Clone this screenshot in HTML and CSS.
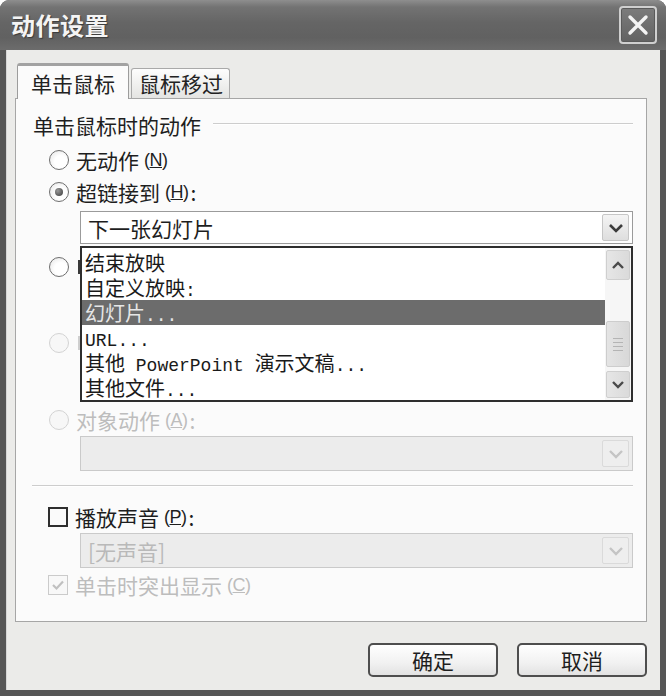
FILE: index.html
```html
<!DOCTYPE html>
<html lang="zh-CN">
<head>
<meta charset="utf-8">
<title>动作设置</title>
<link rel="stylesheet" href="styles.css">
</head>
<body>
<div class="window">
  <div class="titlebar">
    <span class="title">动作设置</span>
    <span class="close">
      <svg width="24" height="24" viewBox="0 0 24 24"><path d="M4 4 L20 20 M20 4 L4 20" stroke="#f4f4f4" stroke-width="3.4" stroke-linecap="round" fill="none"/></svg>
    </span>
  </div>
  <div class="client">
    <div class="tabs">
      <div class="tab active">单击鼠标</div>
      <div class="tab">鼠标移过</div>
    </div>
    <div class="panel">
      <div class="group-head"><span>单击鼠标时的动作</span><i class="rule"></i></div>

      <label class="opt gap-a"><span class="radio"></span>无动作<span class="acc">(<u>N</u>)</span></label>
      <label class="opt gap-b"><span class="radio on"></span>超链接到<span class="acc">(<u>H</u>)</span>:</label>

      <div class="combo-wrap gap-c">
        <div class="combo">
          <span class="combo-text">下一张幻灯片</span>
          <span class="drop">
            <svg width="16" height="10" viewBox="0 0 16 10"><path d="M2 2 L8 8 L14 2" stroke="#3c3c3c" stroke-width="2.6" fill="none"/></svg>
          </span>
        </div>
        <div class="list">
          <ul class="items">
            <li>结束放映</li>
            <li>自定义放映<span class="m">:</span></li>
            <li class="sel">幻灯片<span class="m">...</span></li>
            <li><span class="m">URL...</span></li>
            <li>其他<span class="m"> PowerPoint </span>演示文稿<span class="m">...</span></li>
            <li>其他文件<span class="m">...</span></li>
          </ul>
          <div class="vscroll">
            <span class="sbtn">
              <svg width="14" height="9" viewBox="0 0 14 9"><path d="M2 7 L7 2 L12 7" stroke="#4a4a4a" stroke-width="2.4" fill="none"/></svg>
            </span>
            <span class="track"></span>
            <span class="thumb"><i></i><i></i><i></i><i></i></span>
            <span class="sbtn down">
              <svg width="14" height="9" viewBox="0 0 14 9"><path d="M2 2 L7 7 L12 2" stroke="#4a4a4a" stroke-width="2.4" fill="none"/></svg>
            </span>
          </div>
        </div>
      </div>

      <label class="opt gap-a2" aria-label="运行程序(R):"><span class="radio"></span><span class="peek"></span></label>
      <div class="field gap-a2"></div>
      <label class="opt disabled gap-a2" aria-label="运行宏(M):"><span class="radio"></span><span class="peek"></span></label>
      <div class="combo disabled gap-c"></div>

      <label class="opt disabled gap-d"><span class="radio"></span>对象动作<span class="acc">(<u>A</u>)</span>:</label>
      <div class="combo disabled tall gap-e">
        <span class="combo-text"></span>
        <span class="drop">
          <svg width="16" height="10" viewBox="0 0 16 10"><path d="M2 2 L8 8 L14 2" stroke="#c4c4c4" stroke-width="2.4" fill="none"/></svg>
        </span>
      </div>

      <i class="separator"></i>

      <label class="opt check-row"><span class="check"></span>播放声音<span class="acc">(<u>P</u>)</span>:</label>
      <div class="combo disabled tall gap-e">
        <span class="combo-text">[无声音]</span>
        <span class="drop">
          <svg width="16" height="10" viewBox="0 0 16 10"><path d="M2 2 L8 8 L14 2" stroke="#c4c4c4" stroke-width="2.4" fill="none"/></svg>
        </span>
      </div>
      <label class="opt disabled check-row2"><span class="check off">
        <svg width="14" height="12" viewBox="0 0 14 12"><path d="M2 6 L5.5 9.5 L12 2.5" stroke="#c0c0c0" stroke-width="2.2" fill="none"/></svg>
      </span>单击时突出显示<span class="acc">(<u>C</u>)</span></label>
    </div>
    <div class="buttons">
      <button class="btn">确定</button>
      <button class="btn">取消</button>
    </div>
  </div>
</div>
</body>
</html>
```
FILE: styles.css
```css
* { box-sizing: border-box; margin: 0; padding: 0; }
html, body { width: 666px; height: 696px; overflow: hidden; background: #ffffff; }
body { font-family: "Noto Sans CJK SC", "Noto Sans", sans-serif; color: #1e1e1e; }

.window {
  width: 666px; height: 696px;
  background: #565656;
  border-radius: 9px 9px 0 0;
  display: flex; flex-direction: column;
  overflow: hidden;
}

.titlebar {
  height: 50px; flex: none;
  display: flex; align-items: center; justify-content: space-between;
  padding: 0 9px 0 11px;
  background: linear-gradient(#8e8e8e 0, #737373 14%, #656565 45%, #616161 75%, #6c6c6c 100%);
}
.title {
  font-size: 24px; line-height: 30px; font-weight: bold;
  color: #f4f4f4; letter-spacing: 0.5px;
  text-shadow: 1px 1px 1px #3a3a3a;
}
.close {
  width: 38px; height: 38px;
  border: 2px solid #cfcfcf; border-radius: 4px;
  background: linear-gradient(#7c7c7c, #626262);
  display: flex; align-items: center; justify-content: center;
  box-shadow: inset 0 0 0 1px #5a5a5a;
}

.client {
  flex: 1;
  margin: 0 6px 6px 6px;
  background: #ebebe9;
  border-left: 1px solid #d6d6d6;
  display: flex; flex-direction: column;
  padding: 13px 13px 0 8px;
}

.tabs { display: flex; align-items: flex-end; height: 35px; padding-left: 2px; position: relative; z-index: 2; }
.tab {
  font-size: 21px; line-height: 28px; color: #222;
  height: 30px; padding: 0 6px 0 7px;
  border: 1px solid #a9a9a9; border-bottom: none;
  border-radius: 3px 3px 0 0;
  background: linear-gradient(#fdfdfd, #e4e4e2);
  margin-left: 2px;
}
.tab.active {
  height: 36px; margin-bottom: -1px; margin-left: 0;
  padding: 3px 13px 0 13px;
  background: #fbfbfb;
  border-color: #9c9c9c;
  border-top: 3px solid #a2a2a2;
}

.panel {
  height: 524px; flex: none;
  background: #fbfbfb;
  border: 1px solid #a6a6a6;
  padding: 14px 13px 0 17px;
  display: flex; flex-direction: column;
  position: relative; z-index: 1;
}

.group-head { display: flex; align-items: center; height: 24px; font-size: 21px; line-height: 24px; }
.group-head .rule { flex: 1; height: 2px; background: #cdcdcd; border-bottom: 1px solid #fff; margin: -3px 0 0 12px; }

.opt {
  display: flex; align-items: center;
  height: 24px; font-size: 21px; line-height: 24px;
  padding-left: 16px;
  white-space: nowrap;
}
.opt.disabled { color: #bdbdbd; }
.acc { font-family: "Liberation Sans", sans-serif; font-size: 18px; margin: 0 2px 0 5px; letter-spacing: -0.5px; }
.peek { display: block; width: 4px; height: 14px; border-left: 2px solid #3a3a3a; margin-left: 2px; }
.disabled .peek { border-left-color: #cfcfcf; }

.radio {
  width: 20px; height: 20px; flex: none;
  border-radius: 50%;
  border: 1.6px solid #6e6e6e;
  background: radial-gradient(circle at 60% 60%, #ffffff 40%, #e2e2e2 100%);
  margin-right: 7px;
  display: flex; align-items: center; justify-content: center;
}
.radio.on::after {
  content: ""; width: 8px; height: 8px; border-radius: 50%;
  background: radial-gradient(circle at 35% 35%, #9a9a9a, #3a3a3a);
}
.disabled .radio { border-color: #d3d3d3; background: #f7f7f7; }

.check {
  width: 20px; height: 20px; flex: none;
  border: 2px solid #2e2e2e; background: #fafafa;
  margin-right: 7px;
  display: flex; align-items: center; justify-content: center;
}
.check.off { border: 1.5px solid #cbcbcb; background: #f8f8f8; }

.gap-a { margin-top: 11px; }
.gap-b { margin-top: 8px; }
.gap-c { margin-top: 7px; }
.gap-a2 { margin-top: 11px; }
.gap-d { margin-top: 13px; }
.gap-e { margin-top: 4px; }

.combo-wrap { position: relative; margin-left: 47px; }
.combo {
  height: 33px;
  border: 1px solid #9b9b9b;
  background: #ffffff;
  display: flex; align-items: center; justify-content: space-between;
  padding: 0 3px 0 7px;
  font-size: 21px; line-height: 28px;
}
.panel > .combo { margin-left: 47px; }
.combo.tall { height: 35px; }
.combo.disabled { background: #ececec; border-color: #cacaca; color: #b9b9b9; }
.drop {
  width: 27px; height: 27px;
  border: 1px solid #c6c6c6; border-radius: 2px;
  background: linear-gradient(#f4f4f4, #dedede);
  display: flex; align-items: center; justify-content: center;
}
.disabled .drop { background: #eeeeee; border-color: #dadada; }

.field { height: 30px; margin-left: 47px; margin-right: 130px; border: 1px solid #9b9b9b; background: #fff; }

.list {
  position: absolute; left: 0; right: 0; top: 100%; margin-top: 2px;
  height: 156px;
  border: 2px solid #2e2e2e;
  background: #ffffff;
  display: flex;
  z-index: 5;
}
.items { list-style: none; flex: 1; padding-top: 2px; }
.items li {
  height: 25px; line-height: 25px;
  font-size: 20px; color: #1a1a1a;
  padding-left: 3px; white-space: pre;
}
.items li.sel { background: #6c6c6c; color: #e6e6e6; }
.m { font-family: "Liberation Mono", monospace; font-size: 18px; }

.vscroll { width: 26px; flex: none; display: flex; flex-direction: column; padding: 2px 1px 2px 1px; background: #f6f6f6; }
.sbtn {
  height: 30px; flex: none;
  border: 1px solid #cfcfcf; border-radius: 2px;
  background: linear-gradient(90deg, #e6e6e6, #dadada);
  display: flex; align-items: center; justify-content: center;
}
.sbtn.down { height: 27px; }
.track { height: 41px; flex: none; }
.thumb {
  height: 46px; flex: none;
  border: 1px solid #cdcdcd; border-radius: 2px;
  background: linear-gradient(90deg, #e4e4e4, #d8d8d8);
  display: flex; flex-direction: column; align-items: center; justify-content: center; gap: 3px;
  margin-bottom: 4px;
}
.thumb i { width: 10px; height: 1px; background: #b4b4b4; }

.separator { height: 2px; background: #cdcdcd; border-bottom: 1px solid #fff; margin: 14px 0 0 -1px; display: block; }

.check-row { margin-top: 18px; padding-left: 15px; }
.check-row2 { margin-top: 5px; padding-left: 15px; }

.buttons { display: flex; justify-content: flex-end; gap: 19px; margin-top: 21px; }
.btn {
  width: 130px; height: 34px;
  border: 2px solid #4e4e4e; border-radius: 5px;
  background: linear-gradient(#ffffff, #f1f1f1 60%, #e2e2e2);
  font-family: "Noto Sans CJK SC", sans-serif; font-size: 21px; line-height: 28px; color: #1e1e1e;
}
```
